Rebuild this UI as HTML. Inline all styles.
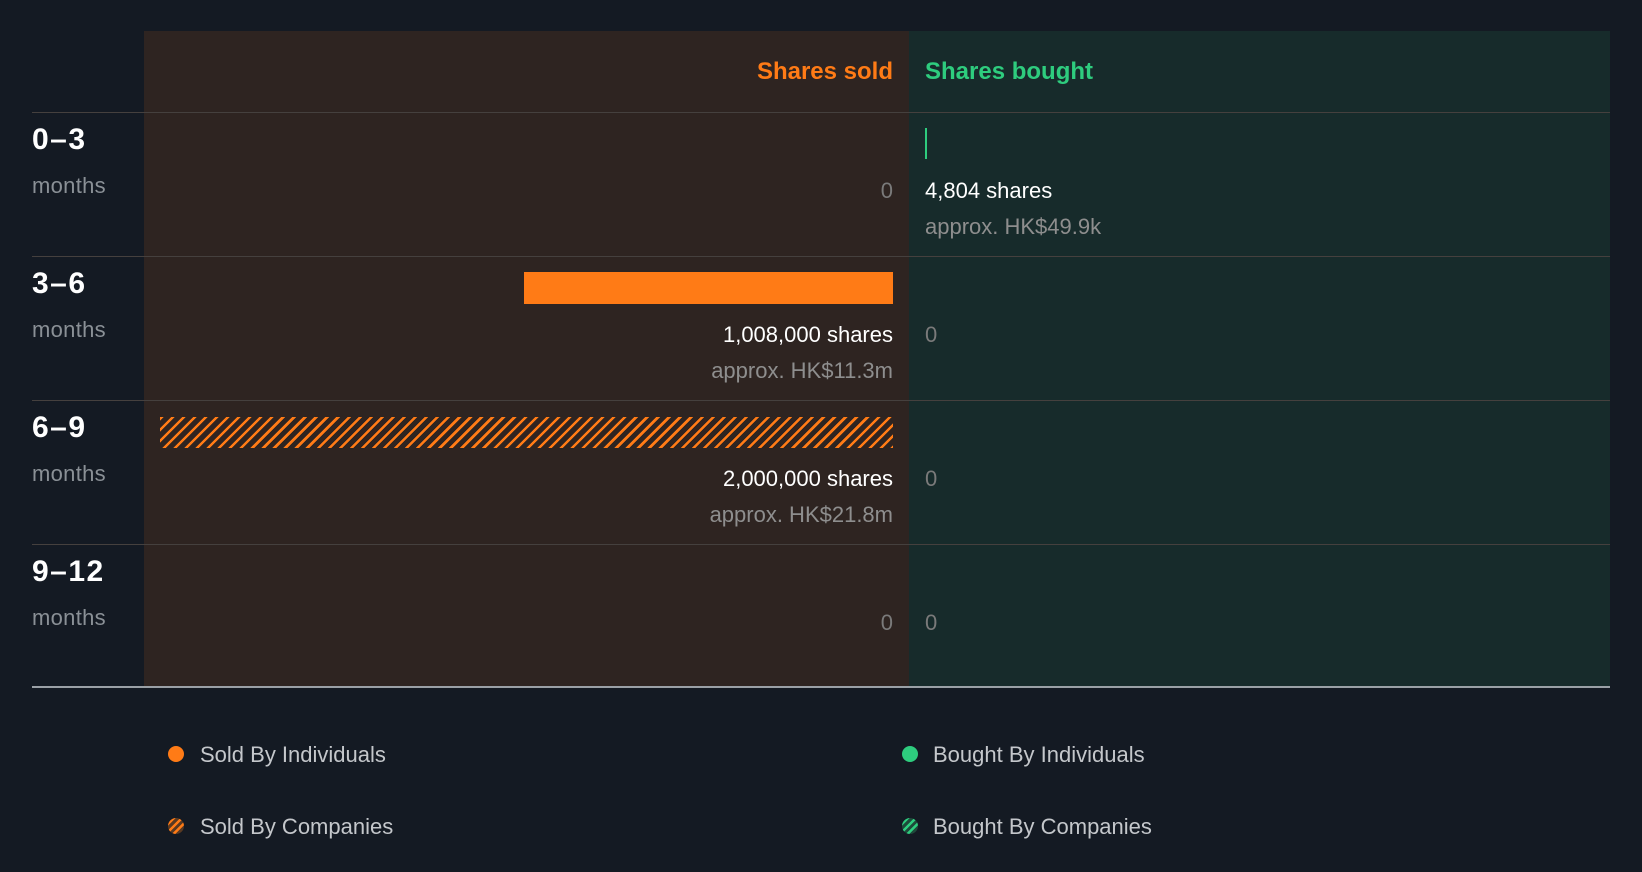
<!DOCTYPE html>
<html><head><meta charset="utf-8"><style>
*{margin:0;padding:0;box-sizing:border-box}
body{width:1642px;height:872px;background:#141a23;font-family:"Liberation Sans",sans-serif;position:relative;overflow:hidden}
.a{position:absolute;white-space:nowrap}
.l{left:144px;width:765px;top:31px;height:656px;background:#2e2421}
.r{left:909px;width:701px;top:31px;height:656px;background:#172b2b}
.hl{left:32px;width:1578px;height:1px;background:#45403e}
.h{font-size:24px;font-weight:bold;top:58px}
.rl{left:32px;font-size:30px;font-weight:bold;color:#fff;letter-spacing:1.5px}
.mo{left:32px;font-size:22px;color:#8a9096;letter-spacing:0.3px}
.z{font-size:22px;color:#7a7a7a}
.sh{font-size:22px;color:#fff}
.ap{font-size:22px;color:#8e8e8e}
.lg{font-size:22px;color:#c4c7cb}
.dot{width:16px;height:16px;border-radius:50%}
</style></head><body>
<div class="a l"></div><div class="a r"></div>
<div class="a h" style="right:749px;color:#ff7b16">Shares sold</div>
<div class="a h" style="left:925px;color:#2ecc7e">Shares bought</div>
<div class="a hl" style="top:112px"></div>
<div class="a hl" style="top:256px"></div>
<div class="a hl" style="top:400px"></div>
<div class="a hl" style="top:544px"></div>
<div class="a" style="left:32px;width:1578px;top:686px;height:2px;background:#9aa0a6"></div>

<div class="a rl" style="top:123px">0–3</div><div class="a mo" style="top:173px">months</div>
<div class="a rl" style="top:267px">3–6</div><div class="a mo" style="top:317px">months</div>
<div class="a rl" style="top:411px">6–9</div><div class="a mo" style="top:461px">months</div>
<div class="a rl" style="top:555px">9–12</div><div class="a mo" style="top:605px">months</div>

<div class="a z" style="right:749px;top:178px">0</div>
<div class="a" style="left:925px;top:128px;width:2px;height:31px;background:#2ecc7e"></div>
<div class="a sh" style="left:925px;top:178px">4,804 shares</div>
<div class="a ap" style="left:925px;top:214px">approx. HK$49.9k</div>

<div class="a" style="left:524px;width:369px;top:272px;height:32px;background:#ff7b16"></div>
<div class="a sh" style="right:749px;top:322px">1,008,000 shares</div>
<div class="a ap" style="right:749px;top:358px">approx. HK$11.3m</div>
<div class="a z" style="left:925px;top:322px">0</div>

<div class="a" style="left:160px;width:733px;top:417px;height:31px;background:repeating-linear-gradient(135deg,#ff7b16 0 2.6px,transparent 2.6px 7.8px)"></div>
<div class="a sh" style="right:749px;top:466px">2,000,000 shares</div>
<div class="a ap" style="right:749px;top:502px">approx. HK$21.8m</div>
<div class="a z" style="left:925px;top:466px">0</div>

<div class="a z" style="right:749px;top:610px">0</div>
<div class="a z" style="left:925px;top:610px">0</div>

<div class="a dot" style="left:168px;top:746px;background:#ff7b16"></div>
<div class="a lg" style="left:200px;top:742px">Sold By Individuals</div>
<div class="a dot" style="left:168px;top:818px;background:repeating-linear-gradient(135deg,#5a3a22 0 3px,#ff7b16 3px 5.5px)"></div>
<div class="a lg" style="left:200px;top:814px">Sold By Companies</div>
<div class="a dot" style="left:902px;top:746px;background:#2ecc7e"></div>
<div class="a lg" style="left:933px;top:742px">Bought By Individuals</div>
<div class="a dot" style="left:902px;top:818px;background:repeating-linear-gradient(135deg,#1e4a3a 0 3px,#2ecc7e 3px 5.5px)"></div>
<div class="a lg" style="left:933px;top:814px">Bought By Companies</div>
</body></html>
